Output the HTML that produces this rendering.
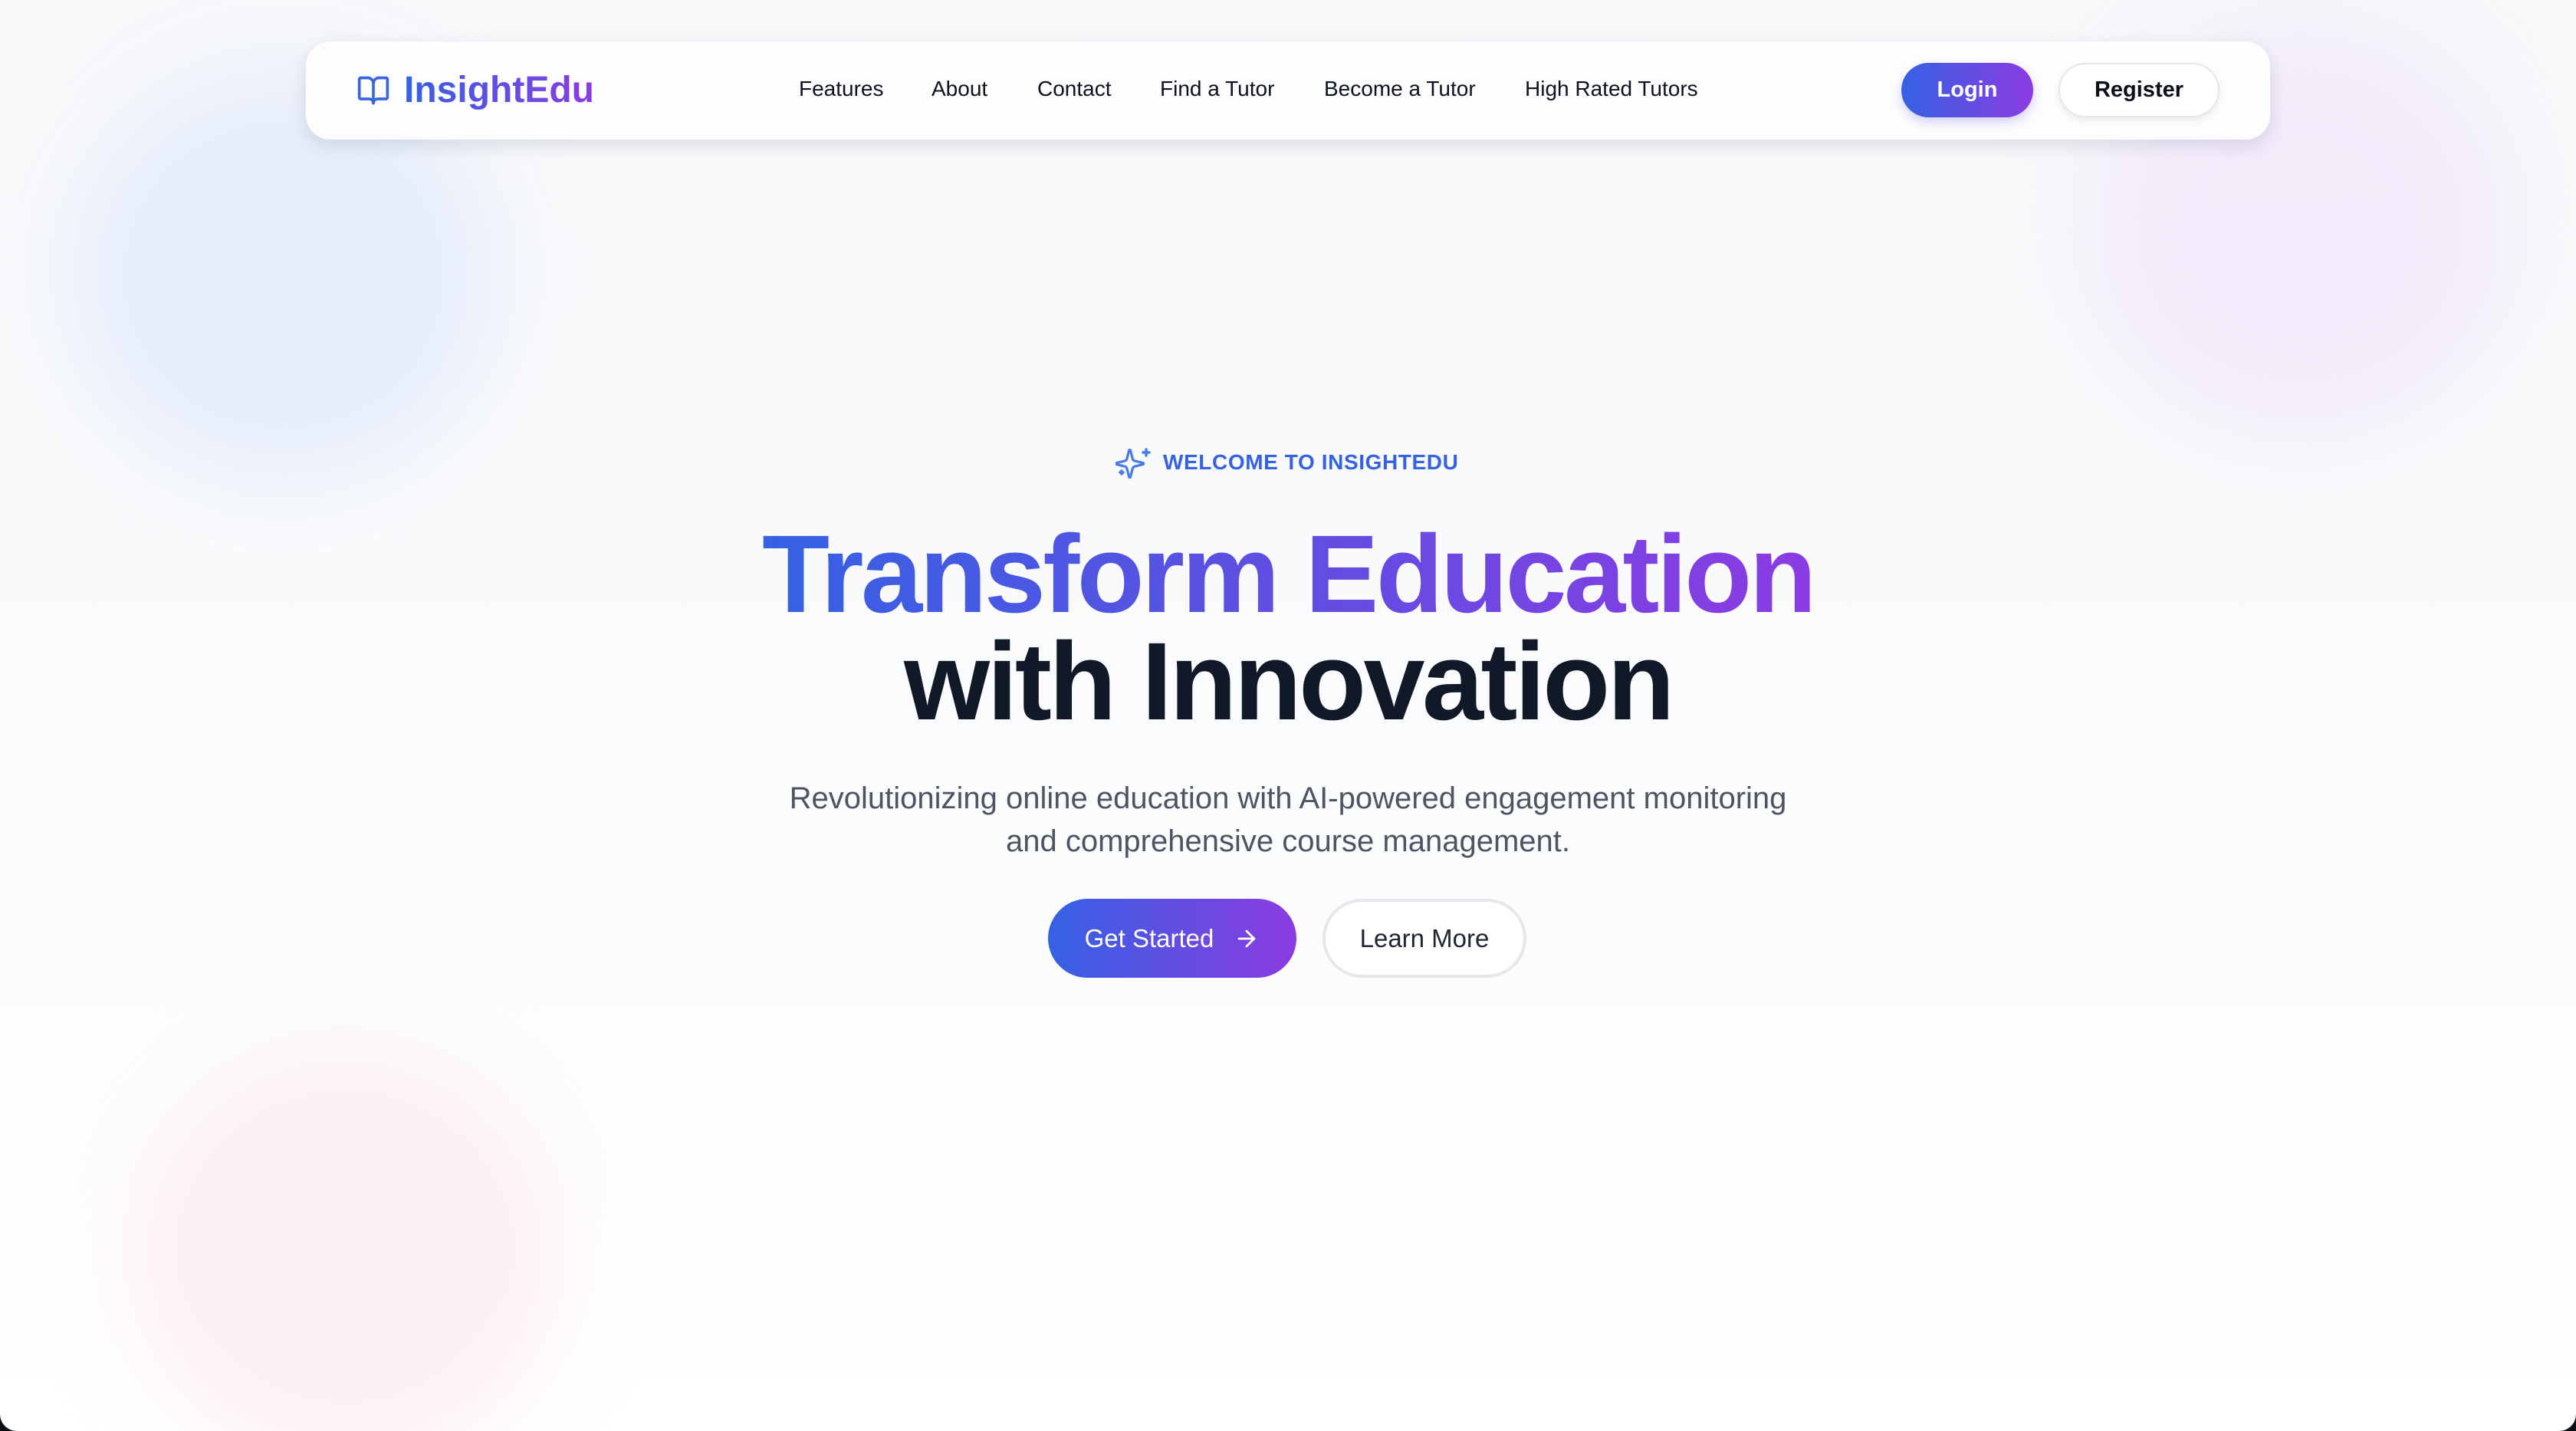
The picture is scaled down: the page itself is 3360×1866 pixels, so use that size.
<!DOCTYPE html>
<html><head><meta charset="utf-8">
<style>
*{margin:0;padding:0;box-sizing:border-box}
html,body{width:3360px;height:1866px;overflow:hidden;background:#0b0f14}
#pg{position:absolute;left:0;top:0;width:3360px;height:1866px;overflow:hidden;border-radius:0 0 22px 22px;
background:linear-gradient(180deg,#f7f8fa 0%,#fafbfc 50%,#ffffff 100%);font-family:"Liberation Sans",Arial,sans-serif}
.blob{position:absolute;border-radius:50%;filter:blur(60px)}
.grad{background:linear-gradient(90deg,#3561e2,#8b3be2)}
.gtext{background:linear-gradient(90deg,#3561e2,#8b3be2);-webkit-background-clip:text;background-clip:text;color:transparent}
#nav{position:absolute;left:399px;top:54px;width:2562px;height:128px;background:#fdfdfe;border-radius:32px;box-shadow:0 8px 24px rgba(20,30,60,.12)}
.nl{position:absolute;top:100px;font-size:28px;color:#0d1220;line-height:32px}
.btn{position:absolute;border-radius:999px;display:flex;align-items:center;justify-content:center}
</style></head><body><div id="pg">
<div class="blob" style="left:90px;top:90px;width:560px;height:540px;background:#e4ecfb;opacity:.9"></div>
<div class="blob" style="left:2720px;top:30px;width:560px;height:540px;background:#f1e8fb;opacity:.8"></div>
<div class="blob" style="left:170px;top:1370px;width:560px;height:540px;background:#fcecf1;opacity:.8"></div>

<div id="nav"></div>
<svg style="position:absolute;left:465px;top:96px" width="44" height="44" viewBox="0 0 24 24" fill="none" stroke="#3b63e2" stroke-width="2" stroke-linecap="round" stroke-linejoin="round"><path d="M12 7v14"/><path d="M3 18a1 1 0 0 1-1-1V4a1 1 0 0 1 1-1h5a4 4 0 0 1 4 4 4 4 0 0 1 4-4h5a1 1 0 0 1 1 1v13a1 1 0 0 1-1 1h-6a3 3 0 0 0-3 3 3 3 0 0 0-3-3z"/></svg>
<div class="gtext" style="position:absolute;left:527px;top:89px;font-size:48px;font-weight:bold;line-height:58px">InsightEdu</div>
<div class="nl" style="left:1042px">Features</div>
<div class="nl" style="left:1215px">About</div>
<div class="nl" style="left:1353px">Contact</div>
<div class="nl" style="left:1513px">Find a Tutor</div>
<div class="nl" style="left:1727px">Become a Tutor</div>
<div class="nl" style="left:1989px">High Rated Tutors</div>
<div class="btn grad" style="left:2480px;top:82px;width:172px;height:71px;color:#fff;font-size:29px;font-weight:bold;box-shadow:0 6px 14px rgba(80,70,220,.25)">Login</div>
<div class="btn" style="left:2685px;top:82px;width:210px;height:71px;background:#fff;border:2px solid #e3e7ee;color:#0b0f1a;font-size:29px;font-weight:bold;box-shadow:0 4px 10px rgba(0,0,0,.08)">Register</div>

<svg style="position:absolute;left:1455px;top:580px" width="48" height="48" viewBox="0 0 24 24" fill="none" stroke="#4a7be6" stroke-width="1.8" stroke-linecap="round" stroke-linejoin="round"><path d="M9.94 15.5A2 2 0 0 0 8.5 14.06l-6.13-1.58a.5.5 0 0 1 0-.96L8.5 9.94A2 2 0 0 0 9.94 8.5l1.58-6.14a.5.5 0 0 1 .96 0L14.06 8.5A2 2 0 0 0 15.5 9.94l6.14 1.58a.5.5 0 0 1 0 .96L15.5 14.06a2 2 0 0 0-1.44 1.44l-1.58 6.13a.5.5 0 0 1-.96 0z" transform="translate(-1.5 1.5) scale(.9)"/><path d="M20 3v4"/><path d="M22 5h-4"/><path d="M4 17v2"/><path d="M5 18H3"/></svg>
<div style="position:absolute;left:1517px;top:586px;font-size:28px;font-weight:bold;color:#3561e2;letter-spacing:0.6px;line-height:34px">WELCOME TO INSIGHTEDU</div>

<div style="position:absolute;left:0;width:3360px;top:679px;text-align:center;font-size:144px;font-weight:bold;letter-spacing:-3.6px;line-height:140px">
<span class="gtext">Transform Education</span><br><span style="color:#111827">with Innovation</span></div>

<div style="position:absolute;left:0;width:3360px;top:1013px;text-align:center;font-size:40px;color:#4b5563;line-height:56px">Revolutionizing online education with AI-powered engagement monitoring<br>and comprehensive course management.</div>

<div class="btn grad" style="left:1367px;top:1172px;width:324px;height:103px;color:#fff;font-size:33px;gap:26px">Get Started
<svg width="34" height="34" viewBox="0 0 24 24" fill="none" stroke="#fff" stroke-width="2" stroke-linecap="round" stroke-linejoin="round"><path d="M5 12h14"/><path d="M12 5l7 7-7 7"/></svg></div>
<div class="btn" style="left:1725px;top:1172px;width:266px;height:103px;background:#fff;border:4px solid #e5e7eb;color:#1f2533;font-size:33px">Learn More</div>
</div></body></html>
